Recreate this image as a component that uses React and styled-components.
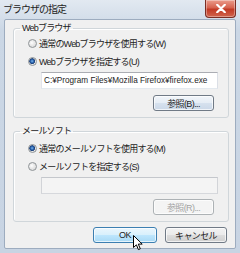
import React from "react";
import styled, { createGlobalStyle } from "styled-components";

const GlobalStyle = createGlobalStyle`
  html, body {
    margin: 0;
    padding: 0;
    background: #ffffff;
  }
  body {
    width: 240px;
    height: 253px;
    overflow: hidden;
  }
`;

const Window = styled.div`
  position: relative;
  width: 240px;
  height: 253px;
  box-sizing: border-box;
  display: flex;
  flex-direction: column;
  background: linear-gradient(#e2e9f1, #cbd7e5 30px, #c8d4e3);
  font-family: "Liberation Sans", "Noto Sans CJK JP", sans-serif;
  color: #1c1c1c;
`;

const TitleBar = styled.div`
  height: 19px;
  display: flex;
  align-items: flex-start;
  justify-content: space-between;
`;

const Title = styled.div`
  padding: 3px 0 0 3px;
  font-size: 10px;
  line-height: 13px;
  letter-spacing: -1px;
  color: #222;
`;

const CloseButton = styled.div`
  width: 31px;
  height: 18px;
  margin-right: 4px;
  box-sizing: border-box;
  display: flex;
  align-items: center;
  justify-content: center;
  border: 1px solid #7a2d24;
  border-top: none;
  border-radius: 0 0 4px 4px;
  background: linear-gradient(#eb9c8c 0%, #d6634f 45%, #c23a25 55%, #d0654e 100%);
  box-shadow: inset 0 0 0 1px rgba(255, 255, 255, 0.35);
`;

const Client = styled.div`
  flex: 1;
  margin: 0 4px 4px 4px;
  padding: 2px 6px 5px 8px;
  display: flex;
  flex-direction: column;
  background: #f0f0f0;
  border: 1px solid #9dacbf;
  border-radius: 2px;
`;

const Group = styled.fieldset`
  margin: ${(p) => p.$mt || 0}px 0 0 0;
  padding: 0 6px 6px 6px;
  min-width: 0;
  border: 1px solid #d0d6da;
  border-radius: 3px;
  box-shadow: inset 1px 1px 0 #ffffff;
`;

const Legend = styled.legend`
  padding: 0 2px;
  font-size: 9px;
  line-height: 12px;
  letter-spacing: -0.8px;
`;

const GroupBody = styled.div`
  display: flex;
  flex-direction: column;
  padding: ${(p) => p.$pt}px 4px 0 8px;
`;

const RadioRow = styled.div`
  height: 14px;
  margin-top: ${(p) => p.$mt || 0}px;
  display: flex;
  align-items: center;
  gap: 2px;
  font-size: 9px;
  letter-spacing: -0.8px;
  white-space: nowrap;
`;

const RadioCircle = styled.span`
  width: 9px;
  height: 9px;
  box-sizing: border-box;
  border-radius: 50%;
  border: 1px solid #8f9497;
  background: ${(p) =>
    p.$checked
      ? "radial-gradient(circle at 45% 45%, #7fb9ef 0, #2b64ae 1.6px, #1b3f78 2.6px, #e9e9e9 3.2px, #cfcfcf 100%)"
      : "radial-gradient(circle at 40% 40%, #ffffff 0, #ececec 2px, #d3d3d3 100%)"};
`;

const PathInput = styled.div`
  height: 17px;
  margin: 4px 0 0 13px;
  padding-left: 2px;
  box-sizing: border-box;
  display: flex;
  align-items: center;
  border: 1px solid ${(p) => (p.$disabled ? "#c4c7cc" : "#abadb3")};
  border-bottom-color: ${(p) => (p.$disabled ? "#d6d8dc" : "#e3e9ef")};
  border-left-color: ${(p) => (p.$disabled ? "#d2d4d8" : "#e2e3ea")};
  border-right-color: ${(p) => (p.$disabled ? "#d2d4d8" : "#dbdfe6")};
  background: ${(p) => (p.$disabled ? "#f4f4f4" : "#ffffff")};
  font-family: "Liberation Sans", sans-serif;
  font-size: 8.2px;
  white-space: nowrap;
  overflow: hidden;
`;

const ButtonRow = styled.div`
  display: flex;
  justify-content: flex-end;
  margin-top: ${(p) => p.$mt}px;
  padding-right: 4px;
`;

const Button = styled.div`
  width: ${(p) => p.$w}px;
  height: 16px;
  box-sizing: border-box;
  display: flex;
  align-items: center;
  justify-content: center;
  border-radius: 3px;
  font-size: 9px;
  letter-spacing: -0.6px;
  white-space: nowrap;
  border: 1px solid
    ${(p) =>
      p.$variant === "hot" ? "#3c7fb1" : p.$variant === "disabled" ? "#adb2b5" : "#707a86"};
  color: ${(p) => (p.$variant === "disabled" ? "#a3a3a3" : "#1c1c1c")};
  background: ${(p) =>
    p.$variant === "hot"
      ? "linear-gradient(#eaf6fd 0%, #d9f0fc 48%, #bee6fd 52%, #a7d9f5 100%)"
      : p.$variant === "disabled"
      ? "#f4f4f4"
      : p.$variant === "blue"
      ? "linear-gradient(#f2f6fa 0%, #e6edf5 48%, #d6e1ee 52%, #cbd8e8 100%)"
      : "linear-gradient(#f2f2f2 0%, #ebebeb 48%, #dddddd 52%, #cfcfcf 100%)"};
  box-shadow: inset 0 0 0 1px rgba(255, 255, 255, 0.7);
`;

const Footer = styled.div`
  display: flex;
  justify-content: flex-end;
  gap: 8px;
  margin-top: 5px;
  padding-right: 2px;
`;

const Cursor = styled.svg`
  position: absolute;
  left: 133px;
  top: 235px;
`;

function Radio({ checked, mt, children }) {
  return (
    <RadioRow $mt={mt}>
      <RadioCircle $checked={checked} />
      <span>{children}</span>
    </RadioRow>
  );
}

export default function App() {
  return (
    <>
      <GlobalStyle />
      <Window>
        <TitleBar>
          <Title>ブラウザの指定</Title>
          <CloseButton>
            <svg width="10" height="9" viewBox="0 0 10 9">
              <path
                d="M1.2 0.8 L8.8 8.2 M8.8 0.8 L1.2 8.2"
                stroke="#ffffff"
                strokeWidth="2.2"
                strokeLinecap="round"
              />
            </svg>
          </CloseButton>
        </TitleBar>
        <Client>
          <Group>
            <Legend>Webブラウザ</Legend>
            <GroupBody $pt={2}>
              <Radio>通常のWebブラウザを使用する(W)</Radio>
              <Radio checked mt={4}>
                Webブラウザを指定する(U)
              </Radio>
              <PathInput>C:¥Program Files¥Mozilla Firefox¥firefox.exe</PathInput>
              <ButtonRow $mt={6}>
                <Button $w={61} $variant="blue">
                  参照(B)...
                </Button>
              </ButtonRow>
            </GroupBody>
          </Group>
          <Group $mt={7}>
            <Legend>メールソフト</Legend>
            <GroupBody $pt={4}>
              <Radio checked>通常のメールソフトを使用する(M)</Radio>
              <Radio mt={4}>メールソフトを指定する(S)</Radio>
              <PathInput $disabled />
              <ButtonRow $mt={5}>
                <Button $w={61} $variant="disabled">
                  参照(R)...
                </Button>
              </ButtonRow>
            </GroupBody>
          </Group>
          <Footer>
            <Button $w={64} $variant="hot">
              OK
            </Button>
            <Button $w={62}>キャンセル</Button>
          </Footer>
        </Client>
        <Cursor width="11" height="17" viewBox="0 0 11 17">
          <path
            d="M0.5 0.5 L0.5 12.5 L3.4 9.8 L5.4 14.6 L7.3 13.8 L5.3 9.1 L9.2 9.1 Z"
            fill="#ffffff"
            stroke="#000000"
            strokeWidth="1"
            strokeLinejoin="round"
          />
        </Cursor>
      </Window>
    </>
  );
}
